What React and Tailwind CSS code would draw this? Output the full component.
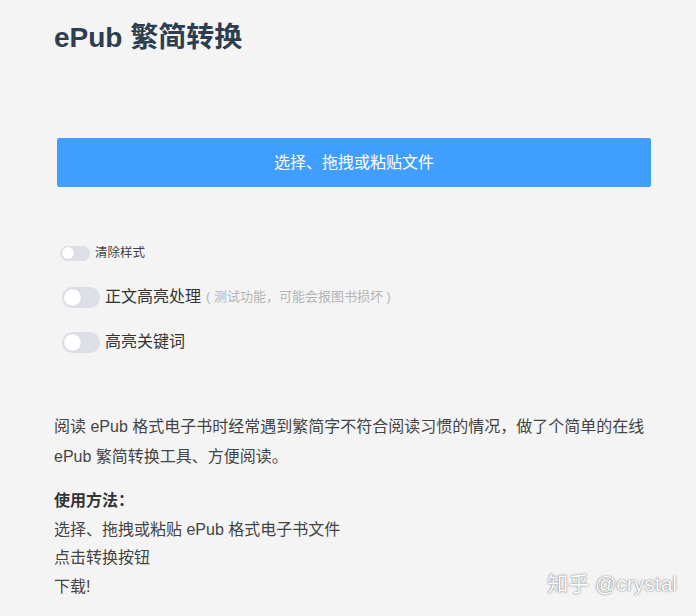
import React from 'react';

const font = 'font-["Liberation_Sans","Noto_Sans_CJK_SC",sans-serif]';

function Toggle({ small }) {
    return small ? (
        <span className="relative inline-flex w-[30px] h-[15px] rounded-full bg-[#dcdfe6] items-center shrink-0">
            <span className="ml-[2px] w-[12px] h-[12px] rounded-full bg-white shadow-[0_0_1px_rgba(0,0,0,0.15)]"></span>
        </span>
    ) : (
        <span className="relative inline-flex w-[38px] h-[21px] rounded-full bg-[#dcdfe6] items-center shrink-0">
            <span className="ml-[2px] w-[17px] h-[17px] rounded-full bg-white shadow-[0_0_1px_rgba(0,0,0,0.15)]"></span>
        </span>
    );
}

export default function App() {
    const steps = ['选择、拖拽或粘贴 ePub 格式电子书文件', '点击转换按钮', '下载!'];

    return (
        <div className={`relative w-[696px] h-[616px] overflow-hidden bg-[#f4f4f4] pl-[54px] pr-[45px] pt-[18px] text-[#333] ${font}`}>
            <h1 className="text-[28px] leading-[39px] font-bold text-[#2c3e50]">ePub 繁简转换</h1>

            {/* Upload button */}
            <button className="mt-[81px] ml-[3px] w-[594px] h-[49px] bg-[#409eff] text-white text-[16px] rounded-[2px]">
                选择、拖拽或粘贴文件
            </button>

            {/* Options */}
            <div className="mt-[54px] ml-[6px] flex flex-col">
                <label className="h-[24px] flex items-center gap-[5px]">
                    <Toggle small />
                    <span className="text-[12.5px] text-[#444]">清除样式</span>
                </label>
                <label className="mt-[20px] h-[24px] flex items-center gap-[5px] ml-[2px]">
                    <Toggle />
                    <span className="text-[16px] text-[#333]">正文高亮处理</span>
                    <span className="text-[13px] text-[#b4b4b4]">( 测试功能，可能会报图书损坏 )</span>
                </label>
                <label className="mt-[21px] h-[24px] flex items-center gap-[5px] ml-[2px]">
                    <Toggle />
                    <span className="text-[16px] text-[#333]">高亮关键词</span>
                </label>
            </div>

            {/* Description */}
            <p className="mt-[58px] text-[16px] leading-[30px] text-[#444]">
                阅读 ePub 格式电子书时经常遇到繁简字不符合阅读习惯的情况，做了个简单的在线 ePub 繁简转换工具、方便阅读。
            </p>

            <div className="mt-[15px] text-[16px] leading-[28.7px] text-[#444]">
                <div className="font-bold text-[#333]">使用方法：</div>
                {steps.map((s) => (
                    <div key={s}>{s}</div>
                ))}
            </div>

            {/* Watermark */}
            <div className="absolute right-[19px] top-[570px] text-[21px] leading-[28px] text-white [text-shadow:0_0_1px_rgba(0,0,0,0.6),0_0_3px_rgba(0,0,0,0.25)]">
                知乎 @crystal
            </div>
        </div>
    );
}
